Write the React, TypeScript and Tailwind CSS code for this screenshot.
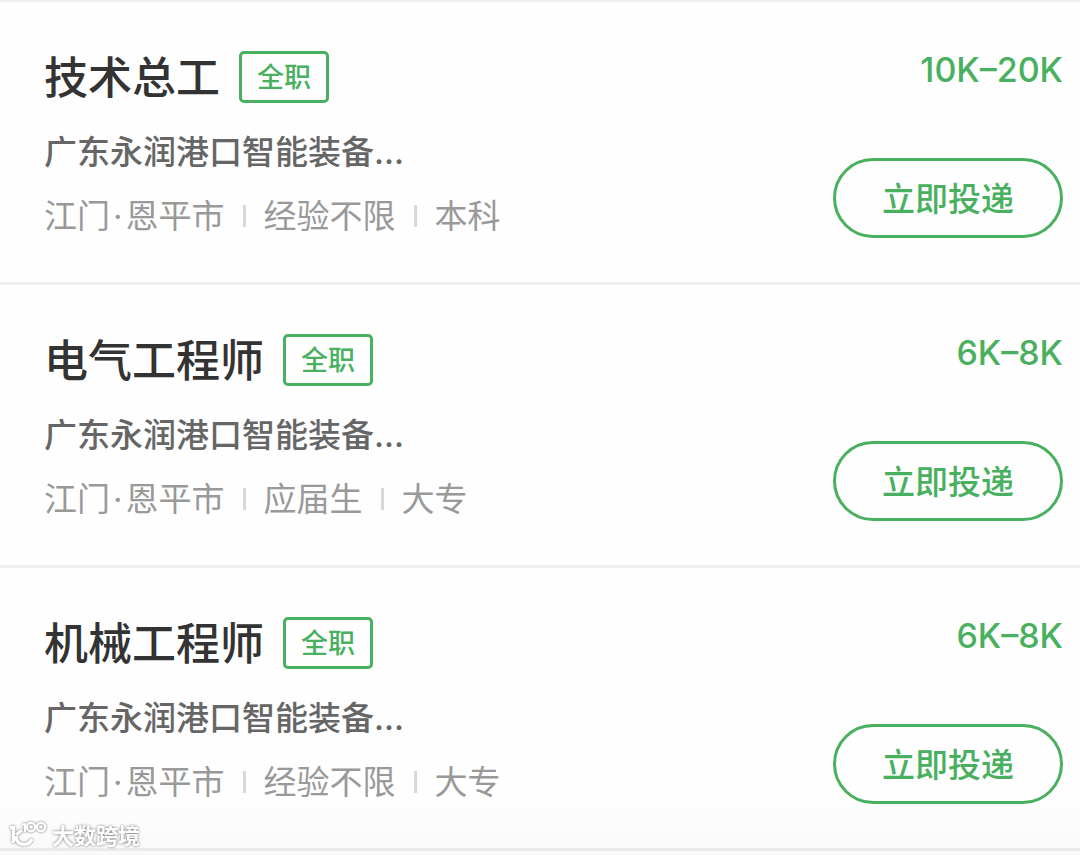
import { Fragment } from "react";

type Job = {
  id: number;
  title: string;
  type: string;
  company: string;
  city: string;
  district: string;
  tags: string[];
  salary: string;
};

const jobs: Job[] = [
  {
    id: 1,
    title: "技术总工",
    type: "全职",
    company: "广东永润港口智能装备...",
    city: "江门",
    district: "恩平市",
    tags: ["经验不限", "本科"],
    salary: "10K–20K",
  },
  {
    id: 2,
    title: "电气工程师",
    type: "全职",
    company: "广东永润港口智能装备...",
    city: "江门",
    district: "恩平市",
    tags: ["应届生", "大专"],
    salary: "6K–8K",
  },
  {
    id: 3,
    title: "机械工程师",
    type: "全职",
    company: "广东永润港口智能装备...",
    city: "江门",
    district: "恩平市",
    tags: ["经验不限", "大专"],
    salary: "6K–8K",
  },
];

function JobRow({ job }: { job: Job }) {
  return (
    <li className="flex justify-between border-b-3 border-[#f0f0f0] pt-12 pr-[17px] pb-[42px] pl-11">
      <div className="min-w-0">
        <div className="flex items-center gap-[19px]">
          <h2 className="pt-0.5 text-[44px] leading-[52px] font-medium text-[#333333]">
            {job.title}
          </h2>
          <span className="rounded-[5px] border-3 border-[#48b05e] px-[15px] pt-0.5 text-[27px] leading-[44px] font-medium text-[#48b05e]">
            {job.type}
          </span>
        </div>
        <p className="mt-6 truncate text-[33px] leading-[48px] font-medium text-[#666666]">
          {job.company}
        </p>
        <div className="mt-4 flex items-center gap-[18px] text-[33px] leading-[48px] text-[#999999]">
          <span>
            {job.city}
            <span className="mx-[3px]">·</span>
            {job.district}
          </span>
          {job.tags.map((tag) => (
            <Fragment key={tag}>
              <span className="h-[22px] w-[3px] bg-[#d8d8d8]" />
              <span>{tag}</span>
            </Fragment>
          ))}
        </div>
      </div>

      <div className="flex shrink-0 flex-col items-end text-[#48b05e]">
        <span className="text-[34px] leading-10 font-medium">{job.salary}</span>
        <button
          type="button"
          className="mt-[68px] h-20 cursor-pointer rounded-full border-3 border-[#48b05e] px-[46px] pt-0.5 text-[33px] leading-[48px] font-medium"
        >
          立即投递
        </button>
      </div>
    </li>
  );
}

function Watermark() {
  return (
    <div className="pointer-events-none fixed inset-x-0 bottom-0 flex h-14 items-end gap-1 bg-linear-to-b from-black/0 to-black/2 pb-[7px] pl-2 text-white">
      <svg
        viewBox="0 0 40 28"
        className="h-7 w-10 drop-shadow-[0_0_1px_rgba(0,0,0,0.6)]"
        fill="none"
        stroke="currentColor"
        strokeWidth="3.4"
      >
        <path d="M2 7.5h3.5V23" />
        <path d="M8 15l6-5M8 16c0 10 12 11 16 3" />
        <path d="M14 4.5h3V12" strokeWidth="2.4" />
        <circle cx="23" cy="7" r="4.2" strokeWidth="2.4" />
        <circle cx="33" cy="7" r="4.2" strokeWidth="2.4" />
        <path d="M26.500 5l3 4M26.500 9l3-4" strokeWidth="1.6" />
      </svg>
      <span className="text-[22px] leading-6 font-bold [text-shadow:0_0_3px_rgba(0,0,0,0.6)]">
        大数跨境
      </span>
    </div>
  );
}

export default function App() {
  return (
    <main className="min-h-screen bg-[#fefefe] font-[Inter,'Noto_Sans_CJK_SC',sans-serif]">
      <ul className="border-t-2 border-[#f0f0f0]">
        {jobs.map((job) => (
          <JobRow key={job.id} job={job} />
        ))}
      </ul>
      <Watermark />
    </main>
  );
}
